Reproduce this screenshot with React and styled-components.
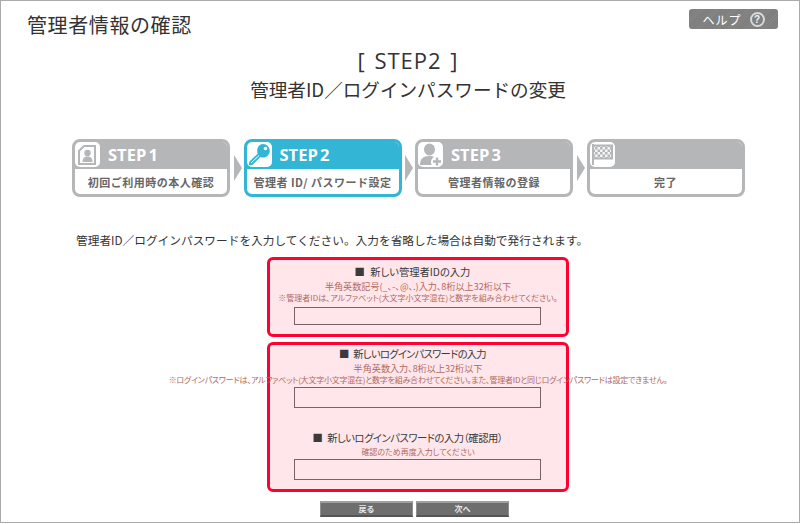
import { Fragment } from "react";
import styled, { createGlobalStyle } from "styled-components";

const GlobalStyle = createGlobalStyle`
  html, body {
    margin: 0;
    padding: 0;
    background: #fff;
  }
  body {
    font-family: "Noto Sans CJK JP", "Noto Sans", sans-serif;
  }
`;

const Page = styled.div`
  box-sizing: border-box;
  width: 800px;
  height: 523px;
  border: 1px solid #aaa;
  overflow: hidden;
  display: flex;
  flex-direction: column;
`;
const Header = styled.header`
  flex: none;
  display: flex;
  justify-content: space-between;
  align-items: flex-start;
  height: 36px;
  padding: 8px 21px 0 26px;
`;
const PageTitle = styled.h1`
  margin: 0;
  font-size: 20px;
  line-height: 32px;
  font-weight: 400;
  letter-spacing: 0.6px;
  color: #333;
`;
const HelpButton = styled.button`
  display: flex;
  align-items: center;
  justify-content: center;
  gap: 8px;
  width: 89px;
  height: 20px;
  padding: 0;
  border: 0;
  border-radius: 3px;
  color: #fff;
  font-family: inherit;
  font-size: 12px;
  letter-spacing: 1px;
  background: repeating-linear-gradient(135deg, #7d7d7d 0 1px, #858585 1px 2px);
`;
const HelpMark = styled.span`
  box-sizing: border-box;
  display: flex;
  align-items: center;
  justify-content: center;
  width: 15px;
  height: 15px;
  border: 2px solid #d8d8d8;
  border-radius: 50%;
  background: #808080;
  color: #f2f2f2;
  font-family: "Liberation Sans", sans-serif;
  font-size: 10px;
  font-weight: 700;
  letter-spacing: 0;
`;
const StepHeading = styled.div`
  flex: none;
  padding-left: 16px;
  text-align: center;
  color: #333;
`;
const StepNo = styled.div`
  font-family: "Open Sans", sans-serif;
  font-size: 22px;
  line-height: 30px;
  letter-spacing: 1px;
  word-spacing: 2px;
`;
const StepName = styled.h2`
  margin: 0;
  font-size: 18.6px;
  line-height: 28px;
  font-weight: 400;
`;
const Flow = styled.ol`
  flex: none;
  list-style: none;
  display: flex;
  align-items: center;
  margin: 36px 0 0 71px;
  padding: 0;
`;
const Card = styled.li`
  box-sizing: border-box;
  flex: none;
  width: 158px;
  height: 58px;
  border: 3px solid ${({ $active }) => ($active ? "#33b5d6" : "#b4b6b8")};
  border-radius: 8px;
  background: #fff;
  display: flex;
  flex-direction: column;
  overflow: hidden;
`;
const CardHead = styled.div`
  height: 27px;
  display: flex;
  align-items: flex-start;
  gap: 8px;
  background: ${({ $active }) => ($active ? "#33b5d6" : "#b4b6b8")};
`;
const IconBox = styled.span`
  flex: none;
  width: 25px;
  height: 25px;
  border-radius: 5px;
  background: #fff;
  display: flex;
  align-items: center;
  justify-content: center;
  overflow: hidden;
`;
const CardStep = styled.span`
  font-family: "Open Sans", sans-serif;
  font-size: 16.5px;
  line-height: 25px;
  font-weight: 700;
  color: #fff;
  word-spacing: -2px;
`;
const CardLabel = styled.div`
  flex: 1;
  display: flex;
  align-items: center;
  justify-content: center;
  font-size: 11px;
  font-weight: 700;
  color: #666;
  letter-spacing: 0.5px;
  white-space: nowrap;
`;
const Arrow = styled.span`
  flex: none;
  width: 0;
  height: 0;
  border-style: solid;
  border-width: 13px 0 13px 8px;
  border-color: transparent transparent transparent #b4b6b8;
  margin: 0 2px 0 3.5px;
`;
const Lead = styled.p`
  flex: none;
  margin: 34px 0 0 75px;
  font-size: 11.7px;
  line-height: 18px;
  color: #333;
  white-space: nowrap;
`;
const Forms = styled.div`
  flex: none;
  display: flex;
  flex-direction: column;
  align-items: center;
  gap: 5px;
  margin: 8px 0 0 36px;
`;
const PinkBox = styled.section`
  box-sizing: border-box;
  flex: none;
  width: 302px;
  height: ${({ $h }) => $h}px;
  border: 3px solid #ff0033;
  border-radius: 6px;
  background: #ffe6ea;
  display: flex;
  flex-direction: column;
  align-items: center;
  padding-top: ${({ $pt }) => $pt}px;
`;
const FieldTitle = styled.h3`
  flex: none;
  margin: 0 ${({ $shift }) => $shift}px 0 0;
  font-size: 10.3px;
  line-height: 16px;
  font-weight: 400;
  font-feature-settings: "palt";
  letter-spacing: ${({ $ls }) => $ls || 0}px;
  word-spacing: 3px;
  color: #3a3a3a;
  white-space: nowrap;
`;
const Note = styled.p`
  flex: none;
  margin: 0;
  font-size: ${({ $small }) => ($small ? "8px" : "9.1px")};
  line-height: 12px;
  font-feature-settings: "palt";
  letter-spacing: ${({ $ls }) => $ls || 0}px;
  color: #b0695f;
  white-space: nowrap;
`;
const Input = styled.input`
  box-sizing: border-box;
  display: block;
  flex: none;
  width: 247px;
  height: ${({ $h }) => $h}px;
  margin: ${({ $mt }) => $mt}px 2px 0 0;
  border: 1px solid #7a6266;
  background: #ffe6ea;
`;
const Spacer = styled.div`
  flex: none;
  height: ${({ $h }) => $h}px;
`;
const Buttons = styled.div`
  flex: none;
  display: flex;
  justify-content: center;
  gap: 3px;
  margin: 9px 0 0 29px;
`;
const NavButton = styled.button`
  box-sizing: border-box;
  width: 93px;
  height: 16px;
  padding: 0;
  border: 1px solid #8f8f8f;
  border-top: 2px solid #a0a0a0;
  border-bottom: 2px solid #555;
  background: #6e6e6e;
  color: #e8e8e8;
  font-family: inherit;
  font-size: 8px;
  font-weight: 700;
  line-height: 12px;
`;

const IdIcon = () => (
  <svg width="25" height="25" viewBox="0 0 25 25">
    <path d="M9 4h11v18H4V9z" fill="none" stroke="#b4b6b8" strokeWidth="2" />
    <circle cx="12.500" cy="11" r="3.200" fill="#b4b6b8" />
    <path d="M7.500 20c0-4 2-5.500 5-5.500s5 1.500 5 5.500z" fill="#b4b6b8" />
  </svg>
);
const KeyIcon = () => (
  <svg width="25" height="25" viewBox="0 0 25 25">
    <path d="M16 2a6.800 6.800 0 0 1 6.800 6.800c0 3.800-3 6.800-6.800 6.800-1 0-1.900-.2-2.700-.6L6 22.500c-.8.700-3.400 1-3.800.5-.5-.5-.2-3 .5-3.800l8-7.500c-.3-.8-.5-1.700-.5-2.800C10.200 5 12.500 2 16 2z" fill="#33b5d6" />
    <circle cx="18.500" cy="6.500" r="1.800" fill="#fff" />
    <path d="M4 21l8-7.500" stroke="#fff" strokeWidth="1" />
  </svg>
);
const AddUserIcon = () => (
  <svg width="25" height="25" viewBox="0 0 25 25">
    <ellipse cx="11.500" cy="7.500" rx="5.500" ry="6" fill="#b4b6b8" />
    <path d="M2 23c0-6 3-9 9.500-9 2 0 3.500.3 4.500 1-2 1-3 3-3 5 0 1 .2 2 .7 3z" fill="#b4b6b8" />
    <path d="M19 15.500v8M15 19.500h8" stroke="#b4b6b8" strokeWidth="2.400" />
  </svg>
);
const FlagIcon = () => (
  <svg width="25" height="25" viewBox="0 0 25 25">
    <defs>
      <pattern id="check" width="5" height="5" patternUnits="userSpaceOnUse">
        <rect width="5" height="5" fill="#f4f4f4" />
        <rect width="2.500" height="2.500" fill="#b4b6b8" />
        <rect x="2.500" y="2.500" width="2.500" height="2.500" fill="#b4b6b8" />
      </pattern>
    </defs>
    <path d="M3 2v21" stroke="#b4b6b8" strokeWidth="2" />
    <path d="M3 3.500h19v13H3z" fill="url(#check)" stroke="#b4b6b8" strokeWidth="2" />
  </svg>
);

const steps = [
  { no: "STEP 1", label: "初回ご利用時の本人確認", icon: <IdIcon /> },
  { no: "STEP 2", label: "管理者 ID/ パスワード設定", icon: <KeyIcon />, active: true },
  { no: "STEP 3", label: "管理者情報の登録", icon: <AddUserIcon /> },
  { no: "", label: "完了", icon: <FlagIcon /> },
];

export default function App() {
  return (
    <>
      <GlobalStyle />
      <Page>
        <Header>
          <PageTitle>管理者情報の確認</PageTitle>
          <HelpButton>
            ヘルプ <HelpMark>?</HelpMark>
          </HelpButton>
        </Header>
        <StepHeading>
          <StepNo>[ STEP2 ]</StepNo>
          <StepName>管理者ID／ログインパスワードの変更</StepName>
        </StepHeading>
        <Flow>
          {steps.map((s, i) => (
            <Fragment key={s.label}>
              <Card $active={s.active}>
                <CardHead $active={s.active}>
                  <IconBox>{s.icon}</IconBox>
                  <CardStep>{s.no}</CardStep>
                </CardHead>
                <CardLabel>{s.label}</CardLabel>
              </Card>
              {i < steps.length - 1 && <Arrow />}
            </Fragment>
          ))}
        </Flow>
        <Lead>管理者ID／ログインパスワードを入力してください。入力を省略した場合は自動で発行されます。</Lead>
        <Forms>
          <PinkBox $h={80} $pt={4}>
            <FieldTitle $shift={11}>■ 新しい管理者IDの入力</FieldTitle>
            <Note>半角英数記号(_、-、@、.)入力、8桁以上32桁以下</Note>
            <Note $small>※管理者IDは、アルファベット(大文字小文字混在)と数字を組み合わせてください。</Note>
            <Input $h={18} $mt={3} />
          </PinkBox>
          <PinkBox $h={150} $pt={1}>
            <FieldTitle $shift={11} $ls={-0.7}>■ 新しいログインパスワードの入力</FieldTitle>
            <Note>半角英数入力、8桁以上32桁以下</Note>
            <Note $small $ls={-0.23}>※ログインパスワードは、アルファベット(大文字小文字混在)と数字を組み合わせてください。また、管理者IDと同じログインパスワードは設定できません。</Note>
            <Input $h={21} $mt={1} />
            <Spacer $h={22} />
            <FieldTitle $shift={21} $ls={-0.45}>■ 新しいログインパスワードの入力（確認用）</FieldTitle>
            <Note $small>確認のため再度入力してください</Note>
            <Input $h={21} $mt={1} />
          </PinkBox>
        </Forms>
        <Buttons>
          <NavButton>戻る</NavButton>
          <NavButton>次へ</NavButton>
        </Buttons>
      </Page>
    </>
  );
}
